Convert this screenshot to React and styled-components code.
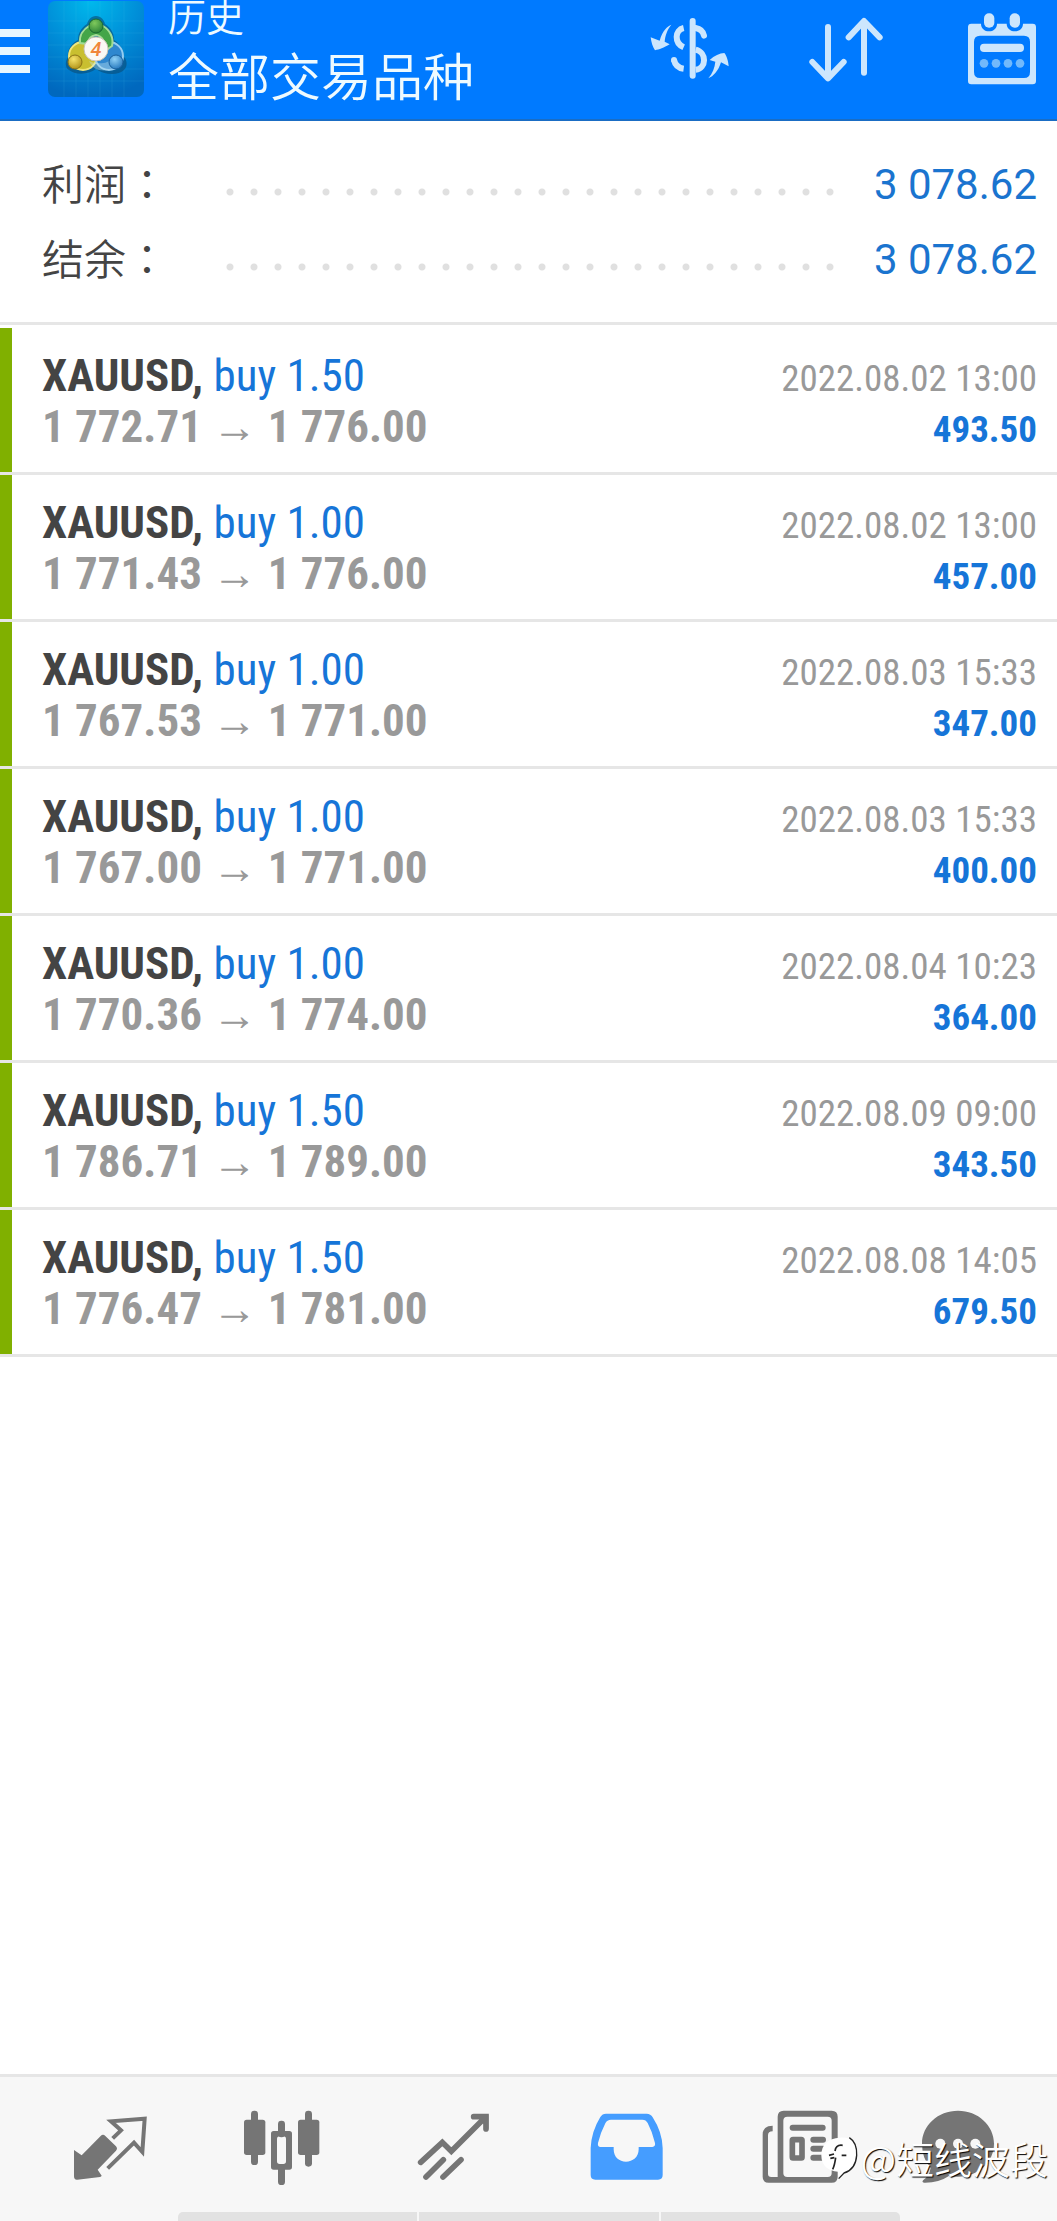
import React from "react";
import styled, { createGlobalStyle } from "styled-components";

const deals = [
  { volume: "1.50", open: "1 772.71", close: "1 776.00", time: "2022.08.02 13:00", profit: "493.50" },
  { volume: "1.00", open: "1 771.43", close: "1 776.00", time: "2022.08.02 13:00", profit: "457.00" },
  { volume: "1.00", open: "1 767.53", close: "1 771.00", time: "2022.08.03 15:33", profit: "347.00" },
  { volume: "1.00", open: "1 767.00", close: "1 771.00", time: "2022.08.03 15:33", profit: "400.00" },
  { volume: "1.00", open: "1 770.36", close: "1 774.00", time: "2022.08.04 10:23", profit: "364.00" },
  { volume: "1.50", open: "1 786.71", close: "1 789.00", time: "2022.08.09 09:00", profit: "343.50" },
  { volume: "1.50", open: "1 776.47", close: "1 781.00", time: "2022.08.08 14:05", profit: "679.50" },
];

const summary = [
  { label: "利润：", value: "3 078.62" },
  { label: "结余：", value: "3 078.62" },
];

const tabs = [
  { label: "行情", Icon: QuotesIcon },
  { label: "图表", Icon: CandlesIcon },
  { label: "交易", Icon: TrendIcon },
  { label: "历史", Icon: InboxIcon, active: true },
  { label: "新闻", Icon: NewsIcon },
  { label: "聊天", Icon: ChatIcon },
];

function App() {
  return (
    <Page>
      <GlobalStyle />
      <Header>
        <MenuButton aria-label="菜单">
          <span />
          <span />
          <span />
        </MenuButton>
        <Logo />
        <Titles>
          <Title>历史</Title>
          <Subtitle>全部交易品种</Subtitle>
        </Titles>
        <Actions>
          <IconButton aria-label="品种">
            <DollarIcon />
          </IconButton>
          <IconButton aria-label="排序">
            <SortIcon />
          </IconButton>
          <IconButton aria-label="日期">
            <CalendarIcon />
          </IconButton>
        </Actions>
      </Header>

      <Main>
        <Summary>
          {summary.map((item) => (
            <SummaryRow key={item.label}>
              <dt>{item.label}</dt>
              <Dots />
              <dd>{item.value}</dd>
            </SummaryRow>
          ))}
        </Summary>
        <Deals>
          {deals.map((deal, index) => (
            <Deal key={index}>
              <DealLine>
                <Symbol>
                  XAUUSD, <span>buy {deal.volume}</span>
                </Symbol>
                <Time>{deal.time}</Time>
              </DealLine>
              <DealLine>
                <Prices>
                  {deal.open} <Arrow>→</Arrow> {deal.close}
                </Prices>
                <Profit>{deal.profit}</Profit>
              </DealLine>
            </Deal>
          ))}
        </Deals>
      </Main>

      <Footer>
        <Tabs>
          {tabs.map(({ label, Icon, active }) => (
            <Tab key={label} aria-label={label} $active={active}>
              <Icon />
            </Tab>
          ))}
        </Tabs>
        <HomeBar>
          <span />
          <span />
          <span />
        </HomeBar>
        <Watermark>
          <WatermarkIcon />
          @短线波段
        </Watermark>
      </Footer>
    </Page>
  );
}

export default App;

function Logo() {
  return (
    <LogoSvg viewBox="0 0 96 96" role="img" aria-label="MetaTrader 4">
      <defs>
        <radialGradient id="sky" cx="0.45" cy="0" r="1">
          <stop offset="0" stopColor="#00b9ec" />
          <stop offset="0.5" stopColor="#008ed8" />
          <stop offset="1" stopColor="#0068be" />
        </radialGradient>
        <radialGradient id="green" cx="0.4" cy="0.3" r="0.8">
          <stop offset="0" stopColor="#7fc95c" />
          <stop offset="1" stopColor="#237c33" />
        </radialGradient>
        <radialGradient id="gold" cx="0.4" cy="0.3" r="0.8">
          <stop offset="0" stopColor="#f6e36a" />
          <stop offset="1" stopColor="#a98a10" />
        </radialGradient>
        <radialGradient id="blue" cx="0.4" cy="0.3" r="0.8">
          <stop offset="0" stopColor="#8fd0f6" />
          <stop offset="1" stopColor="#1a6fb8" />
        </radialGradient>
      </defs>
      <rect width="96" height="96" rx="7" fill="url(#sky)" />
      <path
        d="M16 0v96M28 0v96M40 0v96M52 0v96M64 0v96M76 0v96M0 20h96M0 32h96M0 44h96M0 56h96M0 68h96M0 80h96"
        stroke="#4fc4f2"
        strokeOpacity="0.12"
        fill="none"
      />
      <path d="M48 15c-5 0-8 4-9 8-6 4-9 9-9 16-7 4-11 10-10 17-3 4-3 11 1 13 6 5 19 5 27-1 8 6 22 7 28 1 4-4 3-10 0-13 0-7-4-13-10-17 0-7-3-12-9-16-1-4-4-8-9-8z" fill="#0a4b74" fillOpacity="0.6" />
      <circle cx="35" cy="55" r="14" fill="#c9bf30" stroke="#efe67c" strokeWidth="2" />
      <circle cx="61" cy="55" r="14" fill="#2f87cf" stroke="#93cdf2" strokeWidth="2" />
      <path d="M32 42c-1-8 4-14 9-17h14c7 4 11 12 9 20l-7 5c1-7-2-15-9-16-6 1-8 5-8 9z" fill="#44a548" stroke="#a3dc96" strokeWidth="2" />
      <path d="M73 57c-2 9-11 14-22 12-5-1-8-5-10-9 7 3 18 4 24-3z" fill="#bfe0ee" fillOpacity="0.4" />
      <circle cx="48" cy="25" r="7" fill="url(#green)" stroke="#1b6a31" />
      <circle cx="27" cy="61" r="7" fill="url(#gold)" stroke="#8b7416" />
      <circle cx="68" cy="61" r="7" fill="url(#blue)" stroke="#185f9c" />
      <circle cx="48" cy="48" r="12" fill="#fbf8f4" stroke="#c8c2b4" />
      <text x="48" y="55" textAnchor="middle" fontFamily="Roboto, sans-serif" fontSize="20" fontWeight="500" fontStyle="italic" fill="#f0853a">
        4
      </text>
    </LogoSvg>
  );
}

function DollarIcon() {
  return (
    <svg width="78" height="66" viewBox="91 45 234 198" overflow="visible" fill="none" stroke="currentColor" strokeWidth="18" strokeLinecap="round">
      <path d="M219 60V224" />
      <path d="M192 81C165 87 163 126 192 139M192 203C177 201 166 191 163 177" strokeLinecap="butt" />
      <circle cx="163" cy="177" r="9" fill="currentColor" stroke="none" />
      <path d="M228 81C240 83 250 90 253 104" />
      <path d="M228 146C262 154 261 202 228 206" strokeLinecap="butt" />
      <path d="M155 71C143 76 129 87 120 119L93 109C95 124 99 138 106 148C119 145 132 141 150 130L135 122C137 102 142 88 155 71Z" fill="currentColor" stroke="none" />
      <path d="M266 232C281 226 296 210 304 184L327 196C326 180 321 164 314 156C300 157 284 164 270 177L287 182C285 201 279 217 266 232Z" fill="currentColor" stroke="none" />
    </svg>
  );
}

function SortIcon() {
  return (
    <svg width="76" height="66" viewBox="564 45 228 198" fill="none" stroke="currentColor" strokeWidth="18" strokeLinecap="round" strokeLinejoin="round">
      <path d="M624 78V230M577 183L624 232L671 183" />
      <path d="M732 215V62M686 109L732 60L779 109" />
    </svg>
  );
}

function CalendarIcon() {
  return (
    <svg width="74" height="74" viewBox="1032 34 222 222">
      <path
        fillRule="evenodd"
        fill="currentColor"
        d="M1054 69H1083C1083 83 1094 92 1107 92S1131 83 1131 69H1160C1160 83 1172 92 1185 92S1209 83 1209 69H1238Q1248 69 1248 79V241Q1248 251 1238 251H1054Q1044 251 1044 241V79Q1044 69 1054 69ZM1080 105Q1062 105 1062 123V214Q1062 232 1080 232H1212Q1230 232 1230 214V123Q1230 105 1212 105Z"
      />
      <rect x="1086" y="36" width="43" height="52" rx="20" fill="#007aff" />
      <rect x="1163" y="36" width="43" height="52" rx="20" fill="#007aff" />
      <rect x="1092" y="38" width="31" height="43" rx="15" fill="currentColor" />
      <rect x="1169" y="38" width="31" height="43" rx="15" fill="currentColor" />
      <rect x="1080" y="129" width="132" height="25" rx="12" fill="currentColor" />
      <g fill="#72b9fb">
        <circle cx="1092" cy="188" r="13" />
        <circle cx="1128" cy="188" r="13" />
        <circle cx="1164" cy="188" r="13" />
        <circle cx="1200" cy="188" r="13" />
      </g>
    </svg>
  );
}

function QuotesIcon() {
  return (
    <svg width="80" height="80" viewBox="210 133 240 240">
      <path
        d="M222 268L245 284L302 226Q309 219 316 226L348 257Q354 264 348 270L293 327L305 345Q304 348 300 349L232 357Q222 358 222 347Z"
        fill="currentColor"
      />
      <path d="M338 233L363 209L333 182L434 174L427 274L402 246L323 323" fill="none" stroke="currentColor" strokeWidth="12" />
    </svg>
  );
}

function CandlesIcon() {
  return (
    <svg width="80" height="80" viewBox="726 133 240 240" fill="currentColor">
      <rect x="732" y="177" width="64" height="106" rx="8" />
      <rect x="753" y="150" width="21" height="163" rx="10" />
      <rect x="894" y="177" width="64" height="106" rx="8" />
      <rect x="915" y="150" width="21" height="168" rx="10" />
      <rect x="834" y="180" width="21" height="50" rx="10" />
      <rect x="834" y="315" width="21" height="58" rx="10" />
      <path
        fillRule="evenodd"
        d="M821 211H868Q876 211 876 219V319Q876 327 868 327H821Q813 327 813 319V219Q813 211 821 211ZM839 227Q831 227 831 235V302Q831 310 839 310H850Q858 310 858 302V235Q858 227 850 227Z"
      />
    </svg>
  );
}

function TrendIcon() {
  return (
    <svg width="80" height="80" viewBox="192 133 240 240" fill="none" stroke="currentColor" strokeWidth="17" strokeLinecap="round">
      <path d="M212 305L277 245L304 272L400 176" />
      <path d="M371 168H408V205" />
      <path d="M374 162H415V204Z" fill="currentColor" stroke="none" />
      <path d="M228 349L280 297M279 349L333 297" />
    </svg>
  );
}

function InboxIcon() {
  return (
    <svg width="80" height="80" viewBox="708 133 240 240">
      <path
        fillRule="evenodd"
        fill="currentColor"
        d="M768 159H890Q902 159 908 170Q937 215 938 262V343Q938 357 924 357H736Q722 357 722 343V262Q724 213 751 169Q757 159 768 159ZM783 177Q771 177 766 188Q752 215 744 247Q742 259 752 259H791V266C791 290 808 303 828 303S866 290 866 266V259H907Q917 258 915 247Q907 213 893 187Q888 177 877 177Z"
      />
    </svg>
  );
}

function NewsIcon() {
  return (
    <svg width="80" height="80" viewBox="174 133 240 240">
      <path
        fillRule="evenodd"
        fill="currentColor"
        d="M251 150H395Q413 150 413 168V348Q413 366 395 366H206Q188 366 188 348V222Q188 195 218 195V212Q204 212 204 224V340Q204 349 214 349H233V168Q233 150 251 150ZM262 168Q250 168 250 180V338Q250 349 262 349H383Q395 349 395 338V180Q395 168 383 168Z"
      />
      <rect x="269" y="192" width="108" height="18" rx="9" fill="currentColor" />
      <rect x="277" y="237" width="29" height="55" rx="2" fill="none" stroke="currentColor" strokeWidth="17" />
      <path d="M340 237H369M340 264H369M340 291H369" stroke="currentColor" strokeWidth="18" strokeLinecap="round" />
    </svg>
  );
}

function ChatIcon() {
  return (
    <svg width="80" height="80" viewBox="654 133 240 240">
      <path
        fill="currentColor"
        d="M774 150C834 150 882 194 882 249S834 348 774 348Q760 348 748 345Q715 367 672 366Q664 364 670 358Q688 346 692 322Q666 294 666 249C666 194 714 150 774 150Z"
      />
      <g fill="#f7f7f7">
        <circle cx="721" cy="249" r="15" />
        <circle cx="774" cy="249" r="15" />
        <circle cx="826" cy="249" r="15" />
      </g>
    </svg>
  );
}

function WatermarkIcon() {
  return (
    <svg width="38" height="44" viewBox="360 245 114 132">
      <path d="M419 250C450 246 472 264 471 300C470 335 452 352 432 356L416 373L414 352C385 350 364 335 364 303C364 270 385 252 419 250Z" fill="#fff" />
      <path d="M448 250C464 260 471 280 470 303C468 332 452 350 432 356L416 373" fill="none" stroke="#222" strokeWidth="4" />
      <path d="M387 303L402 299M391 312L403 310M407 310C405 325 403 335 398 345M405 290C407 277 415 271 428 273M425 303H439" fill="none" stroke="#222" strokeWidth="5" />
    </svg>
  );
}

const GlobalStyle = createGlobalStyle`
  * {
    box-sizing: border-box;
  }
  body {
    margin: 0;
    background: #fff;
    font-family: Roboto, "Noto Sans CJK SC", sans-serif;
  }
  button {
    border: 0;
    padding: 0;
    background: none;
    cursor: pointer;
  }
  svg {
    display: block;
  }
`;

const Page = styled.div`
  min-height: 100vh;
  display: flex;
  flex-direction: column;
`;

const Header = styled.header`
  height: 121px;
  display: flex;
  background: #007aff;
  border-bottom: 2px solid #1a6dc4;
  color: #cce6fd;
`;

const MenuButton = styled.button`
  width: 30px;
  height: 102px;
  display: flex;
  flex-direction: column;
  justify-content: center;
  gap: 10px;

  span {
    width: 100%;
    height: 8px;
    background: #e8f6ff;
  }
`;

const LogoSvg = styled.svg`
  width: 96px;
  height: 96px;
  margin: 1px 24px 0 18px;
`;

const Titles = styled.div`
  color: #eefaff;
  white-space: nowrap;
  font-weight: 350;
`;

const Title = styled.div`
  font-size: 38px;
  line-height: 36px;
`;

const Subtitle = styled.h1`
  margin: 0;
  font-size: 51px;
  line-height: 86px;
  font-weight: inherit;
`;

const Actions = styled.div`
  height: 98px;
  margin-left: auto;
  padding-right: 19px;
  display: flex;
  align-items: center;
  gap: 80px;
`;

const IconButton = styled.button`
  color: inherit;
`;

const Main = styled.main`
  flex: 1;
`;

const Summary = styled.dl`
  margin: 0;
  padding: 26px 20px 25px 42px;
  border-bottom: 3px solid #e6e6e6;
`;

const SummaryRow = styled.div`
  display: flex;
  align-items: center;
  height: 75px;
  font-size: 42px;

  dt {
    width: 176px;
    padding-bottom: 6px;
    color: #444;
    /* this cut of the font centres the full-width colon */
    font-family: "Noto Sans CJK TC", sans-serif;
    font-weight: 350;
  }
  dd {
    margin: 0;
    color: #1a74cf;
  }
`;

const Dots = styled.div`
  flex: 1;
  height: 8px;
  margin: 14px 30px 0 0;
  background: radial-gradient(circle, #e0e0e0 3px, transparent 4px) 0 0 / 24px 8px repeat-x;
`;

const Deals = styled.ul`
  margin: 0;
  padding: 3px 0 0;
  list-style: none;
  font-family: "Roboto Condensed", "Liberation Sans Narrow", sans-serif;
`;

const Deal = styled.li`
  height: 147px;
  border-bottom: 3px solid #e6e6e6;
  padding: 22px 20px 0 30px;
  box-shadow: inset 12px 0 #80b000;
`;

const DealLine = styled.div`
  display: flex;
  justify-content: space-between;
  align-items: baseline;
  height: 51px;
  line-height: 51px;
  padding-left: 12px;
`;

const Symbol = styled.span`
  font-size: 45px;
  font-weight: 700;
  color: #444;

  span {
    font-weight: 400;
    color: #1675d8;
  }
`;

const Time = styled.time`
  font-size: 37px;
  color: #999;
`;

const Prices = styled.span`
  font-size: 45px;
  font-weight: 700;
  color: #999;
`;

const Arrow = styled.span`
  line-height: 1;
  font-weight: 400;
`;

const Profit = styled.span`
  font-size: 37px;
  font-weight: 700;
  color: #1675d8;
`;

const Footer = styled.footer`
  position: relative;
  background: #f7f7f7;
  border-top: 3px solid #e6e6e6;
`;

const Tabs = styled.nav`
  height: 135px;
  padding: 0 25px 0 24px;
  display: grid;
  grid-template-columns: repeat(5, 172fr) 148fr;
`;

const Tab = styled.button`
  display: flex;
  align-items: center;
  justify-content: center;
  color: ${(props) => (props.$active ? "#459dff" : "#757575")};
`;

const HomeBar = styled.div`
  height: 9px;
  margin: 0 157px 0 178px;
  display: flex;
  gap: 2px;
  border-radius: 5px 5px 0 0;
  overflow: hidden;

  span {
    flex: 1;
    background: #e2e2e2;
  }
`;

const Watermark = styled.div`
  position: absolute;
  right: 9px;
  bottom: 37px;
  display: flex;
  align-items: center;
  gap: 2px;
  font-family: "Noto Sans CJK SC", sans-serif;
  font-size: 38px;
  line-height: 52px;
  font-weight: 350;
  color: #fff;
  text-shadow: 1px 1px 1px #000;
`;
